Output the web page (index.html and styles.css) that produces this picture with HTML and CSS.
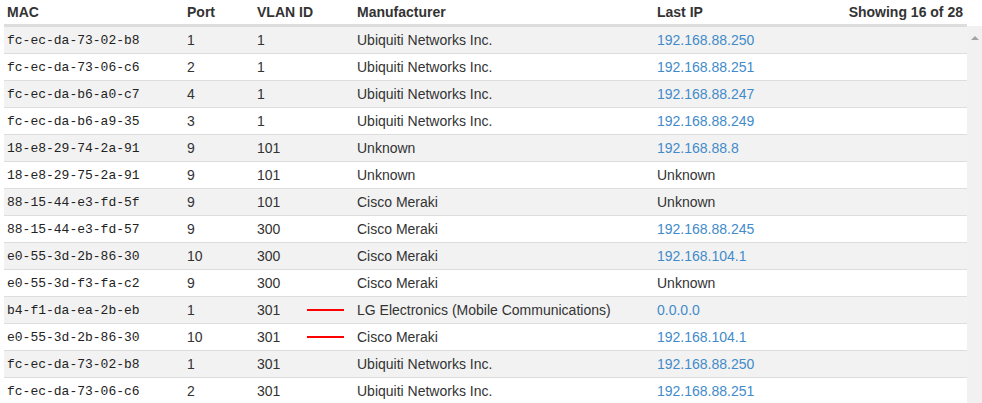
FILE: index.html
```html
<!DOCTYPE html>
<html>
<head>
<meta charset="utf-8">
<link rel="stylesheet" href="styles.css">
</head>
<body>
<div class="wrap">
  <div class="head row-grid">
    <div class="c">MAC</div>
    <div class="c">Port</div>
    <div class="c">VLAN ID</div>
    <div class="c">Manufacturer</div>
    <div class="c last-head"><span>Last IP</span><span>Showing 16 of 28</span></div>
  </div>
  <div class="body">
    <div class="rows">
      <div class="row row-grid"><div class="c mac">fc-ec-da-73-02-b8</div><div class="c">1</div><div class="c"><span class="vl">1</span></div><div class="c">Ubiquiti Networks Inc.</div><div class="c ip">192.168.88.250</div></div>
      <div class="row row-grid"><div class="c mac">fc-ec-da-73-06-c6</div><div class="c">2</div><div class="c"><span class="vl">1</span></div><div class="c">Ubiquiti Networks Inc.</div><div class="c ip">192.168.88.251</div></div>
      <div class="row row-grid"><div class="c mac">fc-ec-da-b6-a0-c7</div><div class="c">4</div><div class="c"><span class="vl">1</span></div><div class="c">Ubiquiti Networks Inc.</div><div class="c ip">192.168.88.247</div></div>
      <div class="row row-grid"><div class="c mac">fc-ec-da-b6-a9-35</div><div class="c">3</div><div class="c"><span class="vl">1</span></div><div class="c">Ubiquiti Networks Inc.</div><div class="c ip">192.168.88.249</div></div>
      <div class="row row-grid"><div class="c mac">18-e8-29-74-2a-91</div><div class="c">9</div><div class="c"><span class="vl">101</span></div><div class="c">Unknown</div><div class="c ip">192.168.88.8</div></div>
      <div class="row row-grid"><div class="c mac">18-e8-29-75-2a-91</div><div class="c">9</div><div class="c"><span class="vl">101</span></div><div class="c">Unknown</div><div class="c">Unknown</div></div>
      <div class="row row-grid"><div class="c mac">88-15-44-e3-fd-5f</div><div class="c">9</div><div class="c"><span class="vl">101</span></div><div class="c">Cisco Meraki</div><div class="c">Unknown</div></div>
      <div class="row row-grid"><div class="c mac">88-15-44-e3-fd-57</div><div class="c">9</div><div class="c"><span class="vl">300</span></div><div class="c">Cisco Meraki</div><div class="c ip">192.168.88.245</div></div>
      <div class="row row-grid"><div class="c mac">e0-55-3d-2b-86-30</div><div class="c">10</div><div class="c"><span class="vl">300</span></div><div class="c">Cisco Meraki</div><div class="c ip">192.168.104.1</div></div>
      <div class="row row-grid"><div class="c mac">e0-55-3d-f3-fa-c2</div><div class="c">9</div><div class="c"><span class="vl">300</span></div><div class="c">Cisco Meraki</div><div class="c">Unknown</div></div>
      <div class="row row-grid"><div class="c mac">b4-f1-da-ea-2b-eb</div><div class="c">1</div><div class="c"><span class="vl">301</span><span class="mark"></span></div><div class="c">LG Electronics (Mobile Communications)</div><div class="c ip">0.0.0.0</div></div>
      <div class="row row-grid"><div class="c mac">e0-55-3d-2b-86-30</div><div class="c">10</div><div class="c"><span class="vl">301</span><span class="mark"></span></div><div class="c">Cisco Meraki</div><div class="c ip">192.168.104.1</div></div>
      <div class="row row-grid"><div class="c mac">fc-ec-da-73-02-b8</div><div class="c">1</div><div class="c"><span class="vl">301</span></div><div class="c">Ubiquiti Networks Inc.</div><div class="c ip">192.168.88.250</div></div>
      <div class="row row-grid"><div class="c mac">fc-ec-da-73-06-c6</div><div class="c">2</div><div class="c"><span class="vl">301</span></div><div class="c">Ubiquiti Networks Inc.</div><div class="c ip">192.168.88.251</div></div>
    </div>
    <div class="scrollbar"><span class="arrow"></span></div>
  </div>
</div>
</body>
</html>
```

FILE: styles.css
```css
html, body {
  margin: 0;
  padding: 0;
  background: #fff;
  overflow: hidden;
}
body {
  font-family: "Liberation Sans", Arial, sans-serif;
  font-size: 14px;
  color: #333;
}
.wrap {
  padding-left: 4px;
  width: 978px;
  height: 403px;
  overflow: hidden;
}
.row-grid {
  display: grid;
  grid-template-columns: 180px 70px 100px 300px 1fr;
}
.head {
  width: 963px;
  height: 24px;
  border-bottom: 3px solid #ddd;
  font-weight: bold;
  box-sizing: content-box;
}
.head .c {
  line-height: 24px;
}
.c {
  padding: 0 3px;
  white-space: nowrap;
  display: flex;
  align-items: center;
}
.last-head {
  justify-content: space-between;
  padding-right: 4px;
}
.body {
  display: flex;
  align-items: stretch;
  height: 377px;
}
.rows {
  width: 963px;
}
.row {
  height: 26px;
  border-bottom: 1px solid #ddd;
}
.row:last-child {
  border-bottom: none;
}
.row:nth-child(odd) {
  background: #f2f2f2;
}
.mac {
  font-family: "Liberation Mono", "DejaVu Sans Mono", monospace;
  font-size: 13px;
  color: #222;
}
.ip {
  color: #428bca;
}
.vl {
  display: inline-block;
  width: 50px;
}
.mark {
  display: inline-block;
  width: 37px;
  height: 2px;
  background: #ff0000;
}
.scrollbar {
  width: 15px;
  margin-top: -1px;
  background: #f1f1f1;
  display: flex;
  justify-content: center;
  align-items: flex-start;
}
.arrow {
  margin-top: 10px;
  width: 0;
  height: 0;
  border-left: 4px solid transparent;
  border-right: 4px solid transparent;
  border-bottom: 4px solid #a3a3a3;
}
```
